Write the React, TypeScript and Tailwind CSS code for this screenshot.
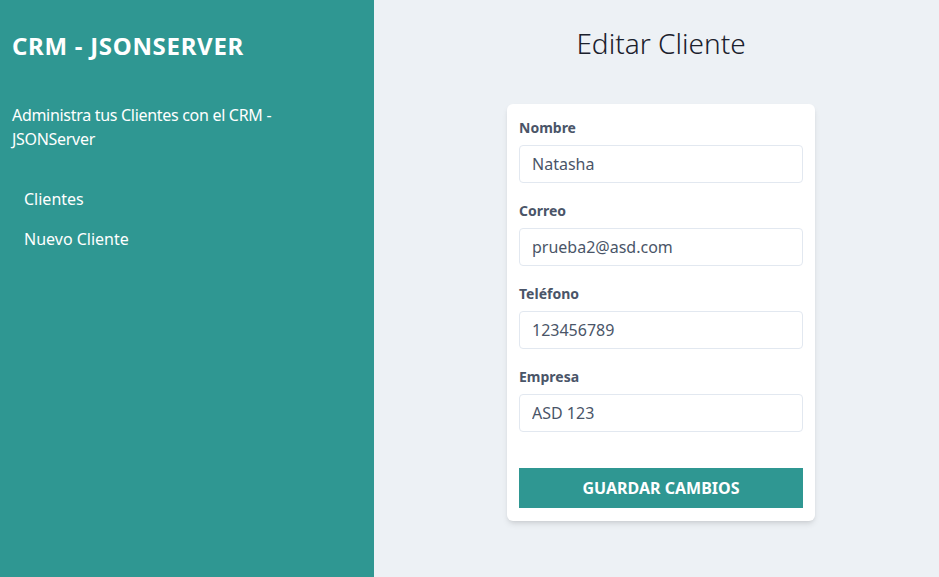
export default function App() {
  const fields = [
    { label: "Nombre", value: "Natasha" },
    { label: "Correo", value: "prueba2@asd.com" },
    { label: "Teléfono", value: "123456789" },
    { label: "Empresa", value: "ASD 123" },
  ];

  return (
    <div className="flex min-h-screen font-['Noto_Sans',sans-serif]">
      {/* Sidebar */}
      <aside className="w-[374px] shrink-0 bg-[#2f9792] px-3 pt-[30px] text-white">
        <h2 className="text-2xl font-bold leading-8 tracking-[0.7px]">CRM - JSONSERVER</h2>
        <p className="mt-[41px] max-w-[300px] text-base leading-6 tracking-[-0.3px]">
          Administra tus Clientes con el CRM - JSONServer
        </p>
        <nav className="mt-[28px] flex flex-col px-3">
          <a className="block py-2 text-base leading-6">Clientes</a>
          <a className="block py-2 text-base leading-6">Nuevo Cliente</a>
        </nav>
      </aside>

      {/* Main */}
      <main className="flex-1 bg-[#edf1f5] pt-[25px] pl-[9px]">
        <h1 className="text-center text-[28px] font-light leading-9 text-[#1a202c]">Editar Cliente</h1>

        <div className="mx-auto mt-[43px] w-[308px] rounded-md bg-white px-3 pt-[14px] pb-[13px] shadow-md">
          <form>
            {fields.map((f) => (
              <div key={f.label} className="mb-[18px]">
                <label className="block text-sm font-bold leading-5 text-[#4a5568]">{f.label}</label>
                <input
                  className="mt-[7px] block h-[38px] w-full rounded border border-[#e2e8f0] bg-white px-3 text-base text-[#4a5568]"
                  defaultValue={f.value}
                />
              </div>
            ))}
            <button
              type="button"
              className="mt-[36px] block h-10 w-full bg-[#2f9792] text-base font-bold uppercase text-white"
            >
              Guardar Cambios
            </button>
          </form>
        </div>
      </main>
    </div>
  );
}
